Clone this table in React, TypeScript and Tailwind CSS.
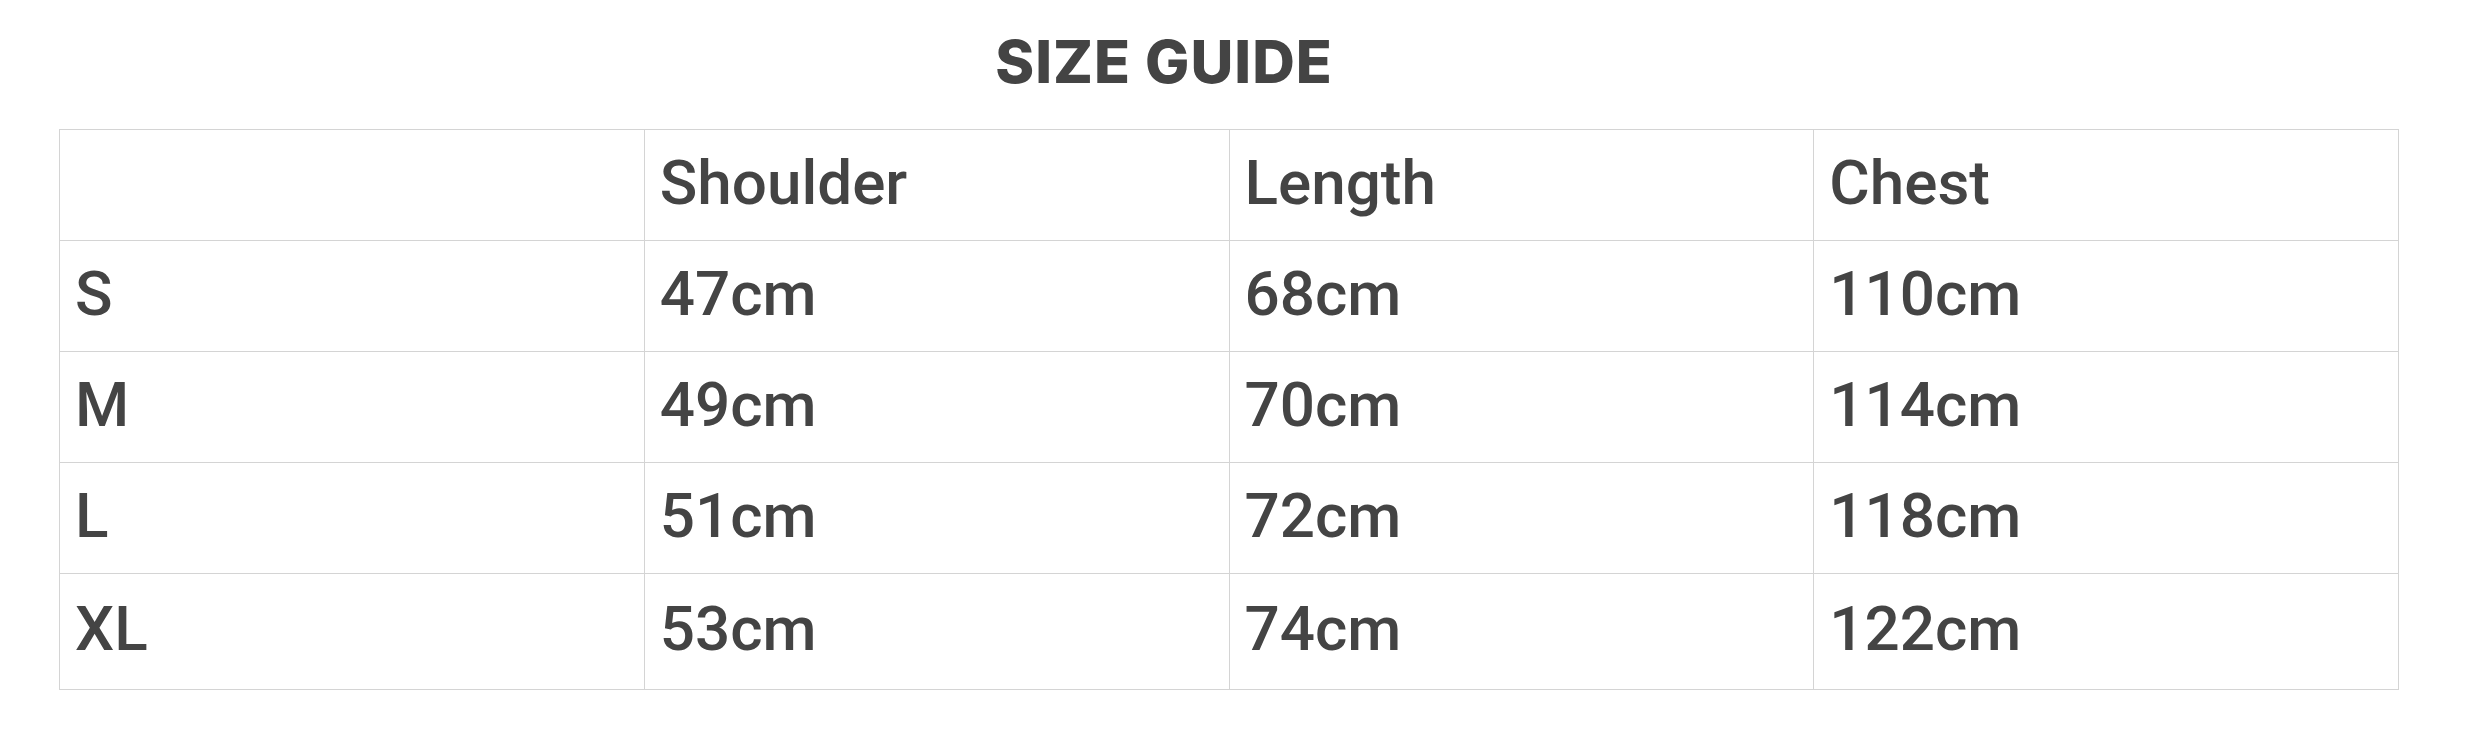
const headers = ['', 'Shoulder', 'Length', 'Chest'];

const rows = [
  ['S', '47cm', '68cm', '110cm'],
  ['M', '49cm', '70cm', '114cm'],
  ['L', '51cm', '72cm', '118cm'],
  ['XL', '53cm', '74cm', '122cm'],
];

export default function App() {
  return (
    <div className="w-[2472px] h-[752px] bg-white text-[#444444]">
      <div className="pt-[32px] pr-[144px] text-center">
        <h1 className="font-['Inter',Arial,sans-serif] font-extrabold text-[59px] leading-none tracking-[1px] h-[97px]">
          SIZE GUIDE
        </h1>
      </div>

      <table className="ml-[59px] w-[2340px] table-fixed border-collapse font-['Roboto',Arial,sans-serif] font-medium text-[62px]">
        <thead>
          <tr>
            {headers.map((h, i) => (
              <th
                key={i}
                className="h-[111px] border border-[#d4d4d4] pl-[15px] pb-[6px] text-left align-middle font-medium"
              >
                {h}
              </th>
            ))}
          </tr>
        </thead>
        <tbody>
          {rows.map((r, ri) => (
            <tr key={r[0]}>
              {r.map((c, ci) => (
                <td
                  key={ci}
                  className={
                    (ri === rows.length - 1 ? 'h-[116px] ' : 'h-[111px] ') +
                    'border border-[#d4d4d4] pl-[15px] pb-[6px] text-left align-middle'
                  }
                >
                  {c}
                </td>
              ))}
            </tr>
          ))}
        </tbody>
      </table>
    </div>
  );
}
